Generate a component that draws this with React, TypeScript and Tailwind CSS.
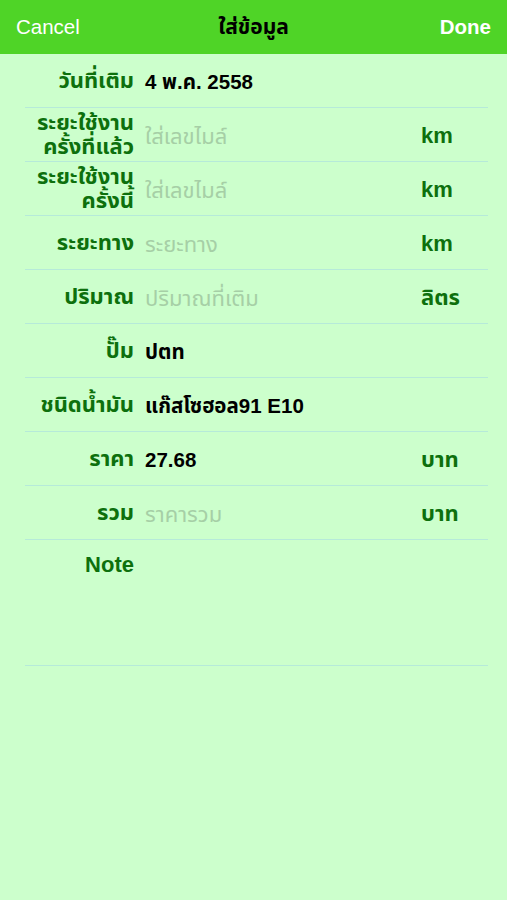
import React from "react";

interface Row {
  label: string[];
  value: string;
  placeholder?: boolean;
  unit?: string;
}

const rows: Row[] = [
  { label: ["วันที่เติม"], value: "4 พ.ค. 2558" },
  { label: ["ระยะใช้งาน", "ครั้งที่แล้ว"], value: "ใส่เลขไมล์", placeholder: true, unit: "km" },
  { label: ["ระยะใช้งาน", "ครั้งนี้"], value: "ใส่เลขไมล์", placeholder: true, unit: "km" },
  { label: ["ระยะทาง"], value: "ระยะทาง", placeholder: true, unit: "km" },
  { label: ["ปริมาณ"], value: "ปริมาณที่เติม", placeholder: true, unit: "ลิตร" },
  { label: ["ปั๊ม"], value: "ปตท" },
  { label: ["ชนิดน้ำมัน"], value: "แก๊สโซฮอล91 E10" },
  { label: ["ราคา"], value: "27.68", unit: "บาท" },
  { label: ["รวม"], value: "ราคารวม", placeholder: true, unit: "บาท" },
];

const font = { fontFamily: '"Liberation Sans", "Noto Sans", "Noto Sans Thai", sans-serif' };

export default function App() {
  return (
    <div className="w-[507px] h-[900px] bg-[#ccffcc] flex flex-col" style={font}>
      <div className="h-[54px] bg-[#4fd427] flex items-center justify-between px-4 relative">
        <span className="text-white text-[20.5px]">Cancel</span>
        <span className="absolute left-0 right-0 text-center text-black font-bold text-[21px] pointer-events-none">
          ใส่ข้อมูล
        </span>
        <span className="text-white font-bold text-[20.5px]">Done</span>
      </div>

      <div className="pl-[25px] pr-[19px]">
        {rows.map((r, i) => (
          <div key={i} className="h-[54px] flex items-center border-b border-[#b6ead9]">
            <div className="w-[109px] shrink-0 text-right text-[#0d700d] font-bold text-[22px] leading-[24px] whitespace-nowrap">
              {r.label.map((l, j) => (
                <div key={j}>{l}</div>
              ))}
            </div>
            <div
              className={
                "ml-[11px] flex-1 pt-[3px] " +
                (r.placeholder ? "text-[#a6cfa6] text-[22px]" : "text-black font-bold text-[20.5px]")
              }
            >
              {r.value}
            </div>
            <div className="w-[67px] text-[#0d700d] font-bold text-[22px] pt-[2px]">{r.unit}</div>
          </div>
        ))}
        <div className="h-[126px] border-b border-[#b6ead9] pt-[8px]">
          <div className="w-[109px] text-right text-[#0d700d] font-bold text-[22px]">Note</div>
        </div>
      </div>
    </div>
  );
}
